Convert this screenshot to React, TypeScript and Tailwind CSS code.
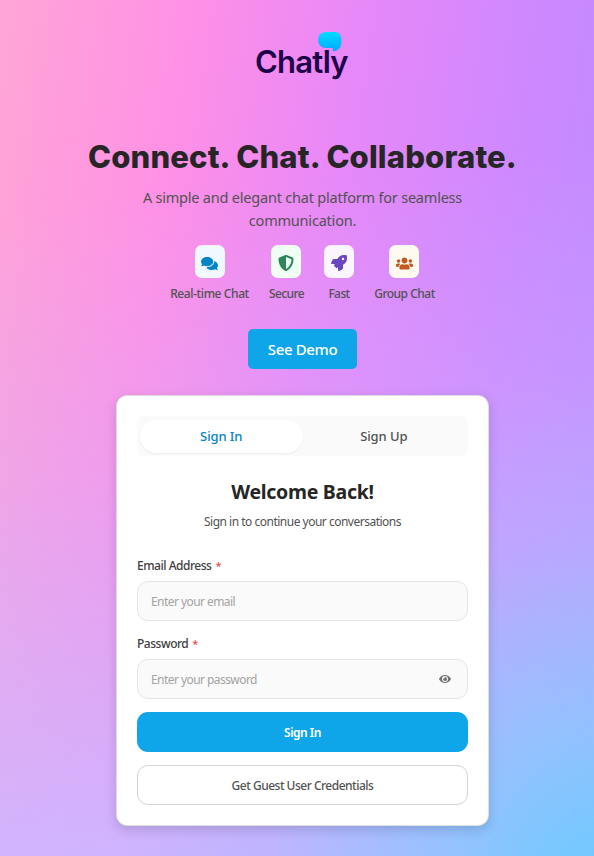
import React from "react";
import { FaComments, FaShieldAlt, FaRocket, FaUsers, FaEye } from "react-icons/fa";

const features = [
  { label: "Real-time Chat", Icon: FaComments, size: 17, box: "bg-[#f0f9ff] text-[#0284c7]", width: "w-[79px]", track: "tracking-[-0.4px]" },
  { label: "Secure", Icon: FaShieldAlt, size: 16, box: "mr-px bg-[#f0fff4] text-[#2f855a]", width: "w-[35px]", track: "tracking-[-0.6px]" },
  { label: "Fast", Icon: FaRocket, size: 16, box: "bg-[#faf5ff] text-[#6b46c1]", width: "w-[30px]", track: "tracking-[-0.6px]" },
  { label: "Group Chat", Icon: FaUsers, size: 17, box: "mr-px bg-[#fffaf0] text-[#c4561f]", width: "w-[61px]", track: "tracking-[-0.5px]" },
];

function Logo() {
  return (
    <div className="relative mt-[31px] h-[48px] w-[93px]">
      <svg className="absolute left-[61px] top-0" width="26" height="22" viewBox="0 0 26 22">
        <defs>
          <linearGradient id="bubble" x1="0" y1="0" x2="0" y2="1">
            <stop offset="0" stopColor="#00dcff" />
            <stop offset="1" stopColor="#00a8ff" />
          </linearGradient>
        </defs>
        <path
          d="M9.500 1H16.500C21.500 1 24.300 3.500 24.300 8.500V12C24.300 16 21.500 19.500 17 20.200C16 20.400 15.800 20 15.800 19V17H9.500C4.500 17 1.200 14.200 1.200 9S4.500 1 9.500 1Z"
          fill="url(#bubble)"
        />
      </svg>
      <span className="absolute left-[-1px] top-[12px] whitespace-nowrap font-['Inter',sans-serif] text-[31px] font-semibold leading-[38px] tracking-[-0.75px] text-[#1c0048]">
        Chatly
      </span>
    </div>
  );
}

function Field({ label, placeholder, eye }: { label: string; placeholder: string; eye?: boolean }) {
  return (
    <div>
      <div className="flex h-[18px] items-center gap-1 text-[12px] font-medium tracking-[-0.48px] text-[#404040]">
        <span>{label}</span>
        <span className="text-[11px] font-normal text-[#e53e3e]">*</span>
      </div>
      <div className="mt-[6px] flex h-10 items-center justify-between rounded-[11px] border border-[#e5e5e5] bg-[#fafafa] pl-[13px] pr-[16px]">
        <input
          placeholder={placeholder}
          className="w-[200px] bg-transparent pt-[2px] text-[12px] tracking-[-0.56px] outline-none placeholder:text-[#a3a3a3]"
        />
        {eye && <FaEye className="text-[#737373]" size={12} />}
      </div>
    </div>
  );
}

export default function App() {
  return (
    <div className="h-[856px] w-full overflow-hidden bg-[radial-gradient(ellipse_85%_62%_at_104%_106%,#62ccff_0%,rgba(125,200,255,0.75)_32%,rgba(160,180,255,0.3)_70%,rgba(180,165,255,0)_100%),linear-gradient(174deg,rgba(205,182,255,0)_22%,rgba(205,182,255,0.3)_52%,#cdb6ff_98%),linear-gradient(98deg,#ffa6d6_0%,#ff90e6_27%,#e888f8_50%,#cc88ff_77%,#ba8cff_100%)] pl-[11px] font-['Noto_Sans','Open_Sans',sans-serif]">
      <div className="flex flex-col items-center">
        <Logo />
        <h1 className="mt-[58px] h-[40px] whitespace-nowrap font-['Inter',sans-serif] text-[31px] font-extrabold leading-[40px] tracking-[0.15px] text-[#262626]">
          Connect. Chat. Collaborate.
        </h1>
        <p className="mt-[9px] text-center text-[14.5px] leading-[23px] tracking-[-0.21px] text-[#525252]">
          A simple and elegant chat platform for seamless
          <br />
          communication.
        </p>
        <div className="mt-[13px] flex gap-5">
          {features.map(({ label, Icon, size, box, width, track }) => (
            <div key={label} className={`flex flex-col items-center ${width}`}>
              <div className={`flex h-[33px] w-[30px] items-center justify-center rounded-[7px] pt-[3px] ${box}`}>
                <Icon size={size} />
              </div>
              <span className={`mt-[7px] whitespace-nowrap text-[12px] font-medium leading-[18px] text-[#525252] ${track}`}>
                {label}
              </span>
            </div>
          ))}
        </div>
        <button className="mt-[26px] h-10 w-[109px] rounded-[5px] bg-[#0ea5e9] text-[15px] font-medium tracking-[-0.35px] text-white">
          See Demo
        </button>
        <div className="mt-[26px] h-[431px] w-[373px] rounded-[11px] border border-[#dedede] bg-white p-5 shadow-[0_4px_12px_rgba(0,0,0,0.15)]">
          <div className="flex h-10 items-center rounded-[7px] bg-[#fafafa] px-[3px] text-[13px] font-medium tracking-[-0.1px]">
            <div className="flex h-[33px] flex-1 items-center justify-center rounded-full bg-white pt-[2px] text-[#0284c7] shadow-[0_1px_2px_rgba(0,0,0,0.06)]">
              Sign In
            </div>
            <div className="flex h-[33px] flex-1 items-center justify-center pt-[2px] text-[#525252]">Sign Up</div>
          </div>
          <h2 className="mt-[22px] text-center text-[19.5px] font-bold leading-[28px] tracking-[-0.3px] text-[#262626]">
            Welcome Back!
          </h2>
          <p className="mt-[7px] text-center text-[12px] leading-[18px] tracking-[-0.5px] text-[#525252]">
            Sign in to continue your conversations
          </p>
          <div className="mt-[26px] flex flex-col gap-[14px]">
            <Field label="Email Address" placeholder="Enter your email" />
            <Field label="Password" placeholder="Enter your password" eye />
          </div>
          <button className="mt-[13px] block h-10 w-full rounded-[11px] bg-[#0ea5e9] pt-[2px] text-[12px] font-semibold tracking-[-0.5px] text-white">
            Sign In
          </button>
          <button className="mt-[13px] block h-10 w-full rounded-[11px] border border-[#d4d4d4] bg-white pt-[2px] text-[12px] font-medium tracking-[-0.5px] text-[#525252]">
            Get Guest User Credentials
          </button>
        </div>
      </div>
    </div>
  );
}
